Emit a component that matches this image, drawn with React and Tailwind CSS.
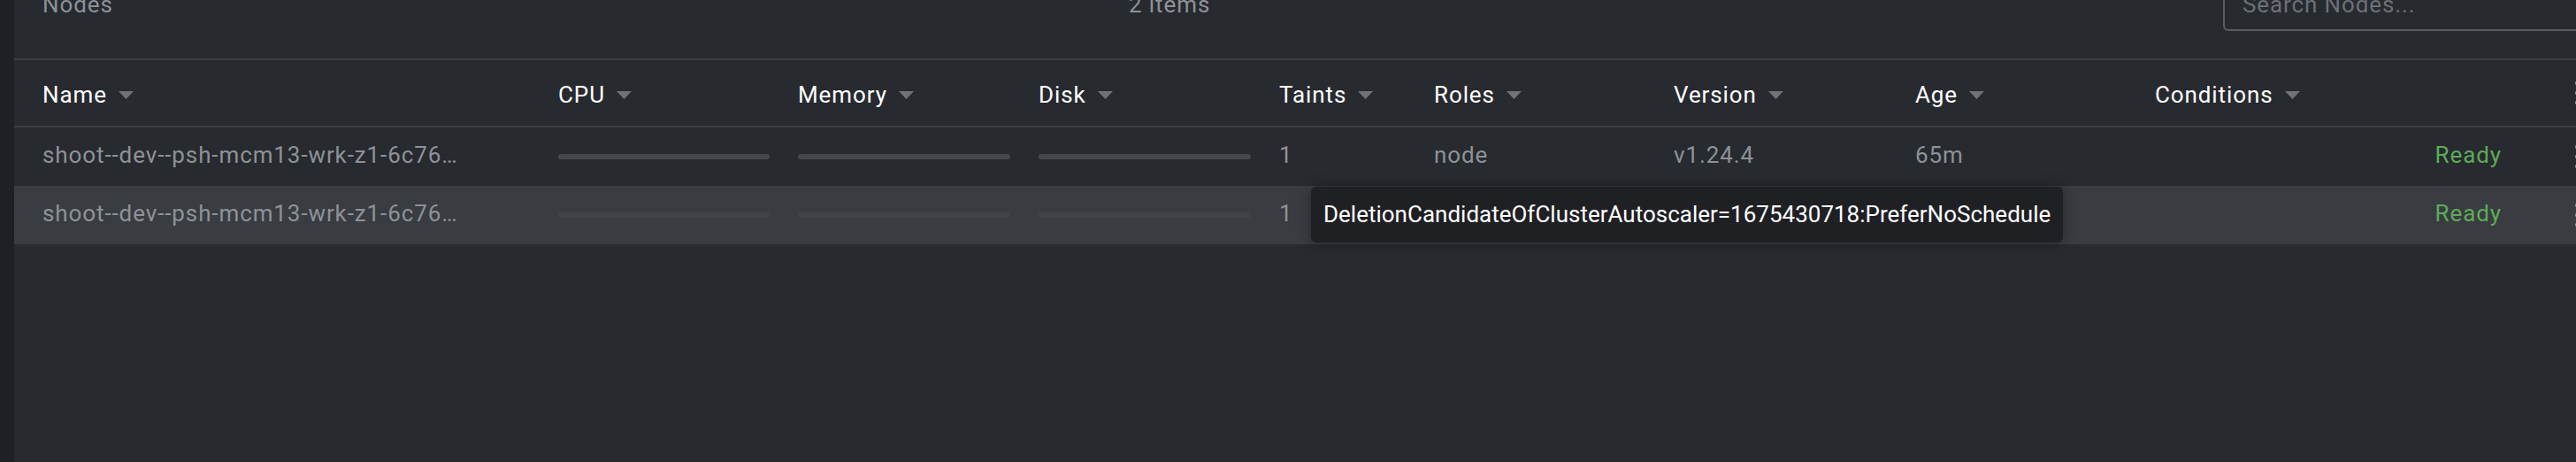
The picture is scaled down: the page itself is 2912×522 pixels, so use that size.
import React from "react";

function SortArrow() {
  return (
    <svg width="17" height="9" viewBox="0 0 17 9" className="ml-[13px] shrink-0">
      <path d="M0 0 L17 0 L8.5 9 Z" fill="#6f7277" />
    </svg>
  );
}

function Dots() {
  return (
    <svg width="6" height="30" viewBox="0 0 6 30" className="shrink-0">
      <circle cx="3" cy="4" r="2.2" fill="#8e9297" />
      <circle cx="3" cy="15" r="2.2" fill="#8e9297" />
      <circle cx="3" cy="26" r="2.2" fill="#8e9297" />
    </svg>
  );
}

function HeadCell({ label, w }) {
  return (
    <div className={`${w} shrink-0 px-4 pt-[4px] flex items-center`}>
      <span className="text-white">{label}</span>
      <SortArrow />
    </div>
  );
}

function Bar({ w, color }) {
  return (
    <div className={`${w} shrink-0 px-4`}>
      <div className={`h-[6px] rounded-full ${color}`} />
    </div>
  );
}

function Row({ hovered, tooltip }) {
  const bar = hovered ? "bg-[#404348]" : "bg-[#44474c]";
  return (
    <div className={`flex h-[66px] items-center pl-4 ${hovered ? "bg-[#393c41]" : ""}`}>
      <div className="w-[583px] shrink-0 px-4 pb-[5px] whitespace-nowrap overflow-hidden">
        shoot--dev--psh-mcm13-wrk-z1-6c76…
      </div>
      <Bar w="w-[271px]" color={bar} />
      <Bar w="w-[272px]" color={bar} />
      <Bar w="w-[272px]" color={bar} />
      <div className="relative w-[175px] shrink-0 px-4 pb-[5px]">
        1
        {tooltip && (
          <div className="absolute left-[52px] top-[-15px] z-10 flex h-[63px] items-center whitespace-nowrap rounded-[6px] bg-[#1f2024] px-[14px] tracking-normal text-white shadow-[0_0_16px_rgba(0,0,0,0.35)]">
            DeletionCandidateOfClusterAutoscaler=1675430718:PreferNoSchedule
          </div>
        )}
      </div>
      <div className="w-[271px] shrink-0 px-4 pb-[5px]">node</div>
      <div className="w-[273px] shrink-0 px-4 pb-[5px]">v1.24.4</div>
      <div className="w-[271px] shrink-0 px-4 pb-[5px]">65m</div>
      <div className="w-[424px] shrink-0 px-4 pb-[5px] text-right text-[#5dab58]">Ready</div>
      <div className="shrink-0 pl-[66px] flex items-center">
        <Dots />
      </div>
    </div>
  );
}

export default function App() {
  const cols = [
    { label: "Name", w: "w-[583px]" },
    { label: "CPU", w: "w-[271px]" },
    { label: "Memory", w: "w-[272px]" },
    { label: "Disk", w: "w-[272px]" },
    { label: "Taints", w: "w-[175px]" },
    { label: "Roles", w: "w-[271px]" },
    { label: "Version", w: "w-[273px]" },
    { label: "Age", w: "w-[271px]" },
    { label: "Conditions", w: "w-[424px]" },
  ];
  return (
    <div className="flex h-[522px] w-[2912px] overflow-hidden bg-[#272a2f] font-['Roboto',sans-serif] text-[26px] leading-[30px] tracking-[0.9px] text-[#8e9297]">
      <div className="w-[16px] shrink-0 bg-[#1e2124]" />
      <div className="flex min-w-0 flex-1 flex-col">
        <div className="-mt-[40px] flex h-[108px] shrink-0 items-start border-b-2 border-[#3b3e43] pl-[32px]">
          <div className="w-[1228px] shrink-0 pt-[30px] text-[#8b9199]">Nodes</div>
          <div className="w-[1237px] shrink-0 pt-[30px] text-[#8e9297]">2 items</div>
          <div className="mt-[14px] flex h-[61px] w-[440px] shrink-0 items-center rounded-[6px] border-2 border-[#5a5e64] px-[20px]">
            <span className="text-[#6c7077]">Search Nodes...</span>
          </div>
        </div>
        <div className="flex h-[76px] shrink-0 items-center border-b-2 border-[#3b3e43] pl-4">
          {cols.map((c) => (
            <HeadCell key={c.label} label={c.label} w={c.w} />
          ))}
          <div className="shrink-0 pl-[66px] flex items-center">
            <Dots />
          </div>
        </div>
        <Row />
        <Row hovered tooltip />
      </div>
    </div>
  );
}
